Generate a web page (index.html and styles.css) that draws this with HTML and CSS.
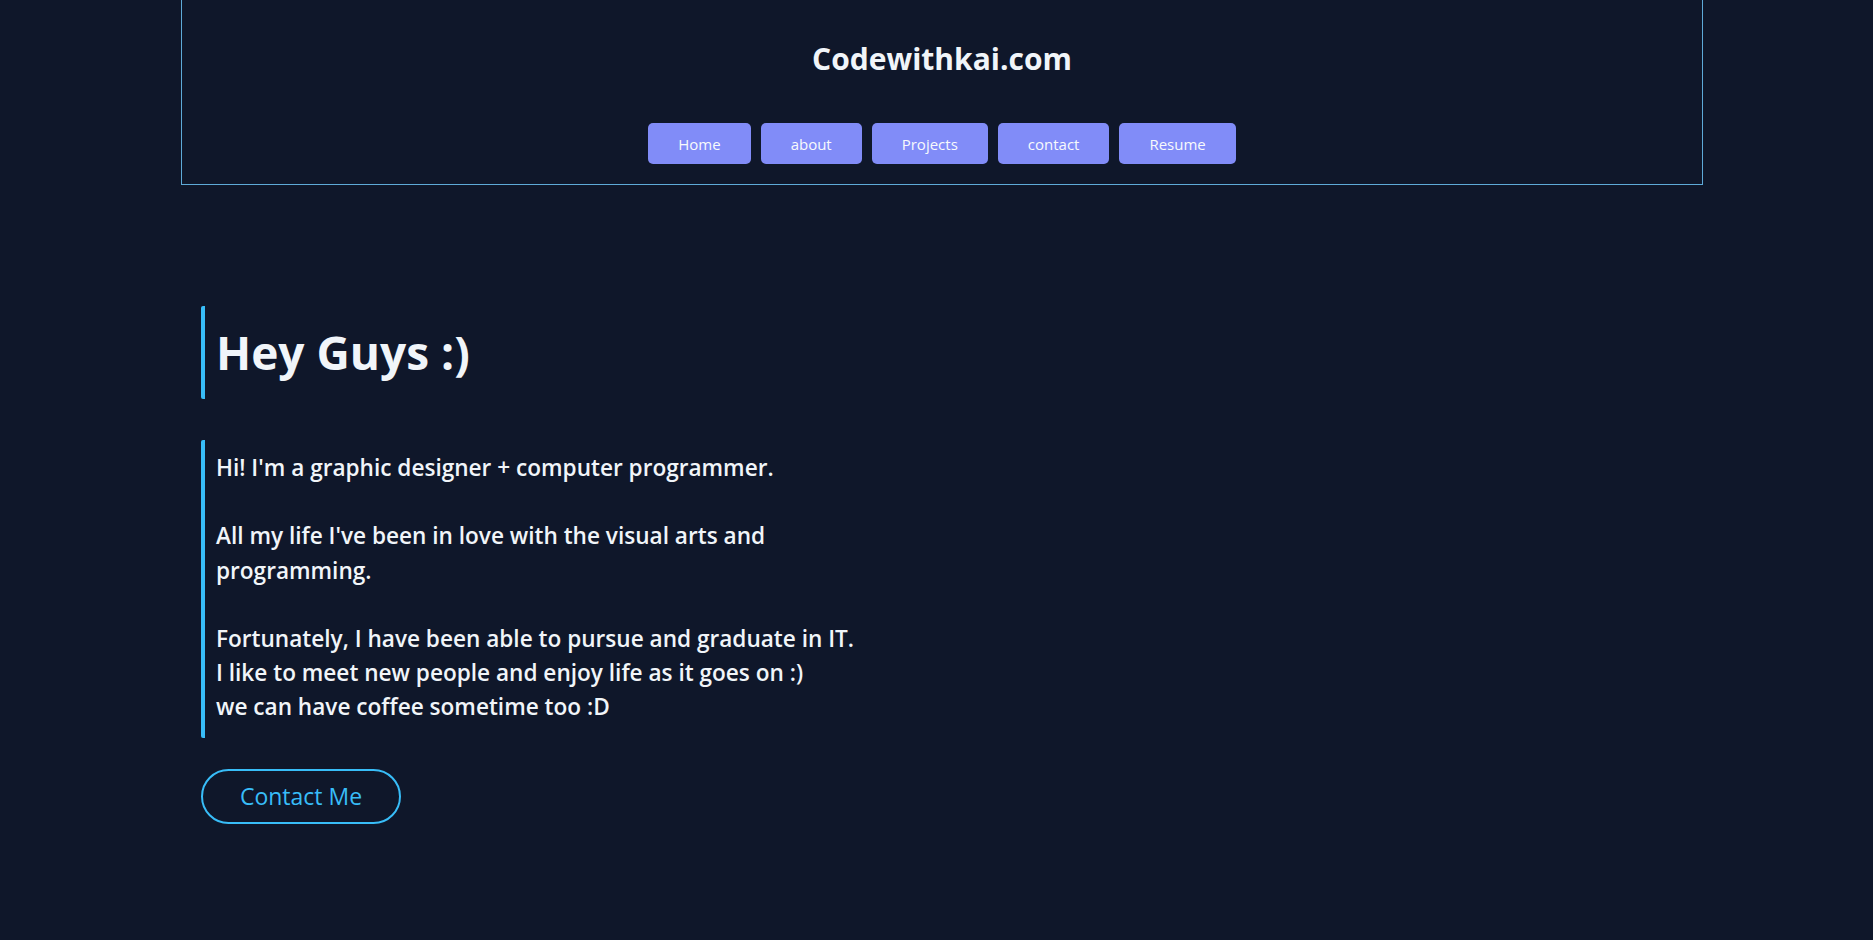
FILE: index.html
```html
<!DOCTYPE html>
<html lang="en">
<head>
<meta charset="utf-8">
<title>Codewithkai.com</title>
<link rel="stylesheet" href="styles.css">
</head>
<body>
  <header class="site-header">
    <h1 class="brand">Codewithkai.com</h1>
    <nav class="nav">
      <a class="nav-btn" href="#">Home</a>
      <a class="nav-btn" href="#">about</a>
      <a class="nav-btn" href="#">Projects</a>
      <a class="nav-btn" href="#">contact</a>
      <a class="nav-btn" href="#">Resume</a>
    </nav>
  </header>
  <main class="intro">
    <h2 class="intro-title">Hey Guys :)</h2>
    <p class="bio">Hi! I'm a graphic designer + computer programmer.<br><br>All my life I've been in love with the visual arts and programming.<br><br>Fortunately, I have been able to pursue and graduate in IT.<br>I like to meet new people and enjoy life as it goes on :)<br>we can have coffee sometime too :D</p>
    <a class="contact-btn" href="#">Contact Me</a>
  </main>
</body>
</html>
```
FILE: styles.css
```css
html, body {
  margin: 0;
  padding: 0;
  background: #0f172a;
  color: #f1f5f9;
  font-family: "Open Sans", "Noto Sans", "Liberation Sans", sans-serif;
}

.site-header {
  margin: 0 170px 0 181px;
  border: 1px solid #5eaad8;
  border-top: none;
  padding: 37px 0 20px;
  text-align: center;
}

.brand {
  margin: 0;
  font-size: 30px;
  font-weight: 700;
  line-height: 44px;
  color: #f1f5f9;
}

.nav {
  display: flex;
  justify-content: center;
  gap: 10px;
  margin-top: 42px;
}

.nav-btn {
  display: flex;
  align-items: center;
  height: 41px;
  padding: 0 30px;
  background: #818cf8;
  color: #f8fafc;
  border-radius: 5px;
  font-size: 15px;
  text-decoration: none;
}

.intro {
  margin-left: 201px;
  padding-top: 121px;
  padding-bottom: 60px;
}

.intro-title {
  margin: 0 0 41px;
  padding: 16px 0 16px 11px;
  border-left: 4px solid #38bdf8;
  border-radius: 2px;
  font-size: 46px;
  font-weight: 700;
  line-height: 61px;
  color: #f1f5f9;
}

.bio {
  width: 670px;
  margin: 0;
  padding: 11px 0 13px 11px;
  border-left: 4px solid #38bdf8;
  border-radius: 2px;
  font-size: 22.6px;
  font-weight: 600;
  line-height: 34.2px;
  color: #f1f5f9;
}

.contact-btn {
  display: inline-flex;
  align-items: center;
  justify-content: center;
  box-sizing: border-box;
  width: 200px;
  height: 55px;
  margin-top: 31px;
  border: 2px solid #38bdf8;
  border-radius: 28px;
  color: #38bdf8;
  font-size: 23px;
  text-decoration: none;
}
```
